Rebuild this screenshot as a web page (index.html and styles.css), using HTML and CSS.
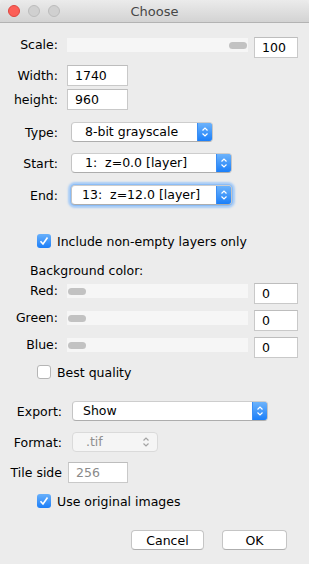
FILE: index.html
```html
<!DOCTYPE html>
<html lang="en">
<head>
  <meta charset="UTF-8">
  <meta name="viewport" content="width=device-width, initial-scale=1.0">
  <title>Choose</title>
  <link rel="stylesheet" href="styles.css">
</head>
<body>
  <div class="titlebar">
    <div class="lights">
      <span class="light red"></span>
      <span class="light"></span>
      <span class="light"></span>
    </div>
    <div class="title">Choose</div>
    <div></div>
  </div>

  <main class="dialog">
    <div class="row slider-row scale-row">
      <span class="lbl">Scale:</span>
      <div class="track"><span class="thumb thumb-end"></span></div>
      <div class="field small">100</div>
    </div>

    <div class="row width-row">
      <span class="lbl">Width:</span>
      <div class="field wide">1740</div>
    </div>
    <div class="row height-row">
      <span class="lbl">height:</span>
      <div class="field wide">960</div>
    </div>

    <div class="row type-row">
      <span class="lbl">Type:</span>
      <div class="popup w-type"><span class="pv">8-bit grayscale</span><span class="arrow"></span></div>
    </div>
    <div class="row start-row">
      <span class="lbl">Start:</span>
      <div class="popup w-range"><span class="pv">1:&nbsp; z=0.0 [layer]</span><span class="arrow"></span></div>
    </div>
    <div class="row end-row">
      <span class="lbl">End:</span>
      <div class="popup w-range focused"><span class="pv pv-tight">13:&nbsp; z=12.0 [layer]</span><span class="arrow"></span></div>
    </div>

    <div class="check-row nonempty-row">
      <span class="box checked"></span>
      <span>Include non-empty layers only</span>
    </div>

    <div class="heading">Background color:</div>

    <div class="row slider-row red-row">
      <span class="lbl">Red:</span>
      <div class="track"><span class="thumb"></span></div>
      <div class="field small">0</div>
    </div>
    <div class="row slider-row green-row">
      <span class="lbl">Green:</span>
      <div class="track"><span class="thumb"></span></div>
      <div class="field small">0</div>
    </div>
    <div class="row slider-row blue-row">
      <span class="lbl">Blue:</span>
      <div class="track"><span class="thumb"></span></div>
      <div class="field small">0</div>
    </div>

    <div class="check-row best-row">
      <span class="box"></span>
      <span>Best quality</span>
    </div>

    <div class="row export-row">
      <span class="lbl lbl-wide">Export:</span>
      <div class="popup w-export"><span class="pv pv-tight">Show</span><span class="arrow"></span></div>
    </div>
    <div class="row format-row">
      <span class="lbl lbl-wide">Format:</span>
      <div class="popup w-format disabled"><span class="pv">.tif</span><span class="arrow"></span></div>
    </div>
    <div class="row tile-row">
      <span class="lbl lbl-wide">Tile side</span>
      <div class="field tile">256</div>
    </div>

    <div class="check-row original-row">
      <span class="box checked"></span>
      <span>Use original images</span>
    </div>

    <div class="buttons">
      <button class="btn cancel">Cancel</button>
      <button class="btn ok">OK</button>
    </div>
  </main>
</body>
</html>
```

FILE: styles.css
```css
body {
  margin: 0;
  background: #ececec;
  font-family: "DejaVu Sans", sans-serif;
  font-size: 12.5px;
  color: #000;
}

/* window title bar */
.titlebar {
  height: 22px;
  display: grid;
  grid-template-columns: 1fr auto 1fr;
  align-items: center;
  background: linear-gradient(#ebebeb, #d3d3d3);
  border-bottom: 1px solid #b3b3b3;
  border-radius: 5px 5px 0 0;
}
.lights {
  display: flex;
  gap: 8px;
  padding-left: 8px;
}
.light {
  width: 10px;
  height: 10px;
  border-radius: 50%;
  background: #d0d0d0;
  border: 1px solid #bcbcbc;
}
.light.red {
  background: #fc5f57;
  border-color: #de463f;
}
.title {
  font-size: 13px;
  color: #474747;
}

/* rows */
.row {
  display: flex;
  align-items: center;
}
.lbl {
  width: 58px;
  text-align: right;
  flex: none;
}
.lbl-wide {
  width: 62px;
}
.slider-row {
  align-items: flex-start;
}
.slider-row .lbl {
  line-height: 14px;
  margin-top: 1px;
}

.scale-row { margin-top: 14px; }
.width-row { margin-top: 7px; }
.height-row { margin-top: 3px; }
.type-row { margin-top: 12px; }
.start-row { margin-top: 11px; }
.end-row { margin-top: 12px; }
.red-row { margin-top: 5px; }
.green-row { margin-top: 6px; }
.blue-row { margin-top: 6px; }
.export-row { margin-top: 22px; }
.format-row { margin-top: 11px; }
.tile-row { margin-top: 10px; }

/* sliders */
.track {
  width: 181px;
  height: 14px;
  margin: 1px 0 0 9px;
  background: #f6f6f6;
  display: flex;
  align-items: center;
  padding: 0 1px;
  box-sizing: border-box;
}
.thumb {
  width: 18px;
  height: 7px;
  border-radius: 4px;
  background: #c2c2c2;
}
.thumb-end {
  margin-left: auto;
}

/* text fields */
.field {
  height: 21px;
  box-sizing: border-box;
  background: #fff;
  border: 1px solid #c9c9c9;
  border-top-color: #bdbdbd;
  line-height: 19px;
  padding-left: 7px;
}
.field.small {
  width: 44px;
  margin-left: 6px;
}
.field.wide {
  width: 61px;
  margin-left: 9px;
}
.field.tile {
  width: 60px;
  margin-left: 6px;
  color: #8a8a8a;
}

/* popup buttons */
.popup {
  height: 20px;
  box-sizing: border-box;
  margin-left: 13px;
  display: flex;
  background: #fff;
  border: 1px solid #c4c4c4;
  border-top-color: #cdcdcd;
  border-bottom-color: #adadad;
  border-radius: 4px;
  overflow: hidden;
}
.pv {
  flex: 1;
  padding-left: 13px;
  line-height: 18px;
  white-space: nowrap;
}
.pv-tight {
  padding-left: 10px;
}
.arrow {
  width: 14px;
  flex: none;
  background-color: #3d95fb;
  background-image:
    url("data:image/svg+xml,%3Csvg xmlns='http://www.w3.org/2000/svg' width='14' height='18'%3E%3Cpath d='M4.5 7.5 7 5 9.5 7.5M4.5 10.5 7 13 9.5 10.5' fill='none' stroke='white' stroke-width='1.2'/%3E%3C/svg%3E"),
    linear-gradient(#6db3fb, #1b7ff9);
  border-left: 1px solid #3b8ef5;
}
.w-type { width: 142px; }
.w-range { width: 161px; }
.w-export { width: 196px; margin-left: 10px; }
.w-format { width: 86px; margin-left: 10px; }

.focused {
  box-shadow: 0 0 0 1px #8cbdf6, 0 0 2px 3px #a9cdf7;
}
.disabled {
  background: #f5f5f5;
  border-color: #dadada;
}
.disabled .pv {
  color: #8f8f8f;
}
.disabled .arrow {
  background-color: transparent;
  background-image: url("data:image/svg+xml,%3Csvg xmlns='http://www.w3.org/2000/svg' width='14' height='18'%3E%3Cpath d='M4.5 7.5 7 5 9.5 7.5M4.5 10.5 7 13 9.5 10.5' fill='none' stroke='%23a3a3a3' stroke-width='1.2'/%3E%3C/svg%3E");
  border-left: none;
  width: 18px;
}

/* checkboxes */
.check-row {
  display: flex;
  align-items: center;
  gap: 6px;
  padding-left: 37px;
  height: 14px;
}
.box {
  width: 14px;
  height: 14px;
  box-sizing: border-box;
  border-radius: 3px;
  background: #fff;
  border: 1px solid #b5b5b5;
  flex: none;
}
.box.checked {
  border: none;
  background-color: #2e8cf9;
  background-image:
    url("data:image/svg+xml,%3Csvg xmlns='http://www.w3.org/2000/svg' width='14' height='14'%3E%3Cpath d='M3.5 7.2 6 10 10.5 3.5' fill='none' stroke='white' stroke-width='1.6'/%3E%3C/svg%3E"),
    linear-gradient(#68b0fb, #1b7ef8);
}
.nonempty-row { margin-top: 29px; }
.best-row { margin-top: 7px; }
.original-row { margin-top: 11px; }

.heading {
  margin-top: 16px;
  padding-left: 30px;
  line-height: 14px;
}

/* bottom buttons */
.buttons {
  display: flex;
  justify-content: flex-end;
  gap: 18px;
  padding-right: 22px;
  margin-top: 22px;
}
.btn {
  height: 20px;
  padding: 0;
  background: #fff;
  border: 1px solid #c5c5c5;
  border-bottom-color: #aeaeae;
  border-radius: 4px;
  font-family: "DejaVu Sans", sans-serif;
  font-size: 12.5px;
  color: #000;
}
.cancel { width: 73px; }
.ok { width: 65px; }
```
